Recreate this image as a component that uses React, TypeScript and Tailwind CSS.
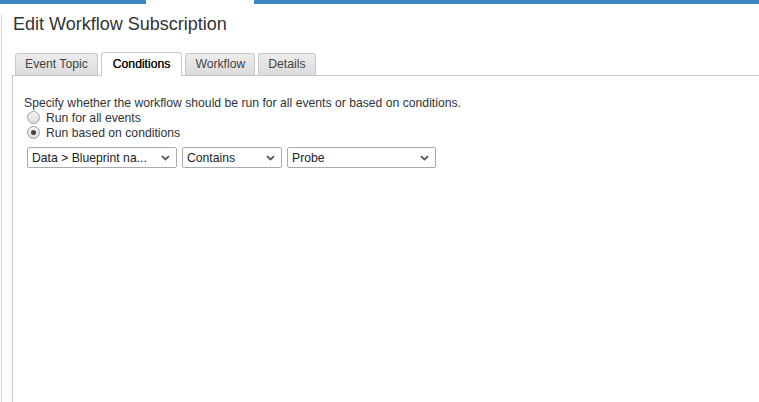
const tabs = ["Event Topic", "Conditions", "Workflow", "Details"];

function Chevron() {
  return (
    <svg width="9" height="6" viewBox="0 0 9 6" className="shrink-0">
      <path d="M1 1.2l3.5 3.3L8 1.2" fill="none" stroke="#555" strokeWidth="1.8" />
    </svg>
  );
}

function Select({ value, width }: { value: string; width: string }) {
  return (
    <div
      className={`${width} h-[21px] flex items-center justify-between pl-[4px] pr-[6px] border border-[#aaa] rounded-[2px] bg-white text-[12.2px] text-[#222]`}
    >
      <span className="truncate">{value}</span>
      <Chevron />
    </div>
  );
}

function Radio({ checked, label }: { checked?: boolean; label: string }) {
  return (
    <div className="flex items-center h-[15px] pl-[3px]">
      <span className="w-[13px] h-[13px] rounded-full border border-[#a0a0a0] bg-gradient-to-b from-[#f4f4f4] to-[#dcdcdc] flex items-center justify-center">
        {checked && <span className="w-[5px] h-[5px] rounded-full bg-[#444]" />}
      </span>
      <span className="ml-[6px]">{label}</span>
    </div>
  );
}

export default function App() {
  return (
    <div className="w-[759px] h-[402px] bg-white overflow-hidden font-['Liberation_Sans',Arial,sans-serif] text-[#333]">
      <div className="flex h-[4px]">
        <div className="w-[146px] bg-[#3a87c6]" />
        <div className="w-[108px]" />
        <div className="flex-1 bg-[#3a87c6]" />
      </div>
      <div className="flex h-[398px]">
        <div className="w-[12px] pt-[11px] pl-[1px]">
          <div className="h-full w-[1px] bg-[#d4d4d4]" />
        </div>
        <div className="flex-1 flex flex-col">
          <h1 className="text-[18px] leading-[22px] mt-[9px] ml-[1px] text-[#333]">Edit Workflow Subscription</h1>
          <div className="flex items-end mt-[18px] pl-[3px] gap-[3px] border-b border-[#c8c8c8] h-[23px]">
            {tabs.map((t) => {
              const active = t === "Conditions";
              return (
                <div
                  key={t}
                  className={
                    active
                      ? "h-[24px] px-[11px] flex items-center border border-b-0 border-[#c8c8c8] rounded-t-[3px] bg-white text-[12.2px] text-[#111] [text-shadow:0_0_0.4px_#111] -mb-[1px] pb-[1px]"
                      : "h-[22px] px-[9px] flex items-center border border-b-0 border-[#c8c8c8] rounded-t-[3px] bg-gradient-to-b from-[#ececec] to-[#dcdcdc] text-[12.2px] text-[#444]"
                  }
                >
                  {t}
                </div>
              );
            })}
          </div>
          <div className="flex-1 border-l border-[#c8c8c8] pl-[11px] pt-[20px] text-[12.2px] leading-[14px]">
            <p>Specify whether the workflow should be run for all events or based on conditions.</p>
            <Radio label="Run for all events" />
            <Radio checked label="Run based on conditions" />
            <div className="flex gap-[5px] mt-[7px] ml-[3px]">
              <Select value="Data > Blueprint na..." width="w-[150px]" />
              <Select value="Contains" width="w-[100px]" />
              <Select value="Probe" width="w-[149px]" />
            </div>
          </div>
        </div>
      </div>
    </div>
  );
}
